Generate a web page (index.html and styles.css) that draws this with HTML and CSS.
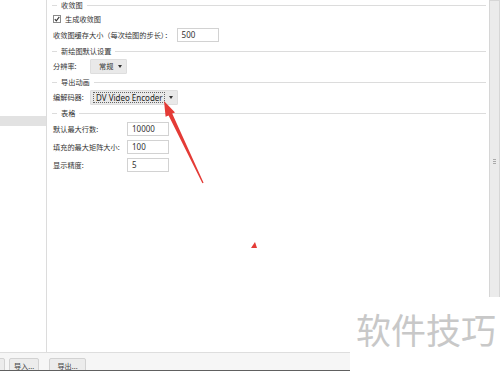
FILE: index.html
```html
<!DOCTYPE html>
<html>
<head lang="zh">
    <meta charset="UTF-8">
    <title>设置</title>
    <link rel="stylesheet" href="styles.css">
</head>
<body>
<div id="app">
    <div id="top">
        <div id="side">
            <div class="side-sel"></div>
        </div>
        <div id="main">
            <div class="legend first"><span>收敛图</span></div>
            <div class="row check">
                <svg class="box" width="8" height="8" viewBox="0 0 8 8">
                    <rect x="0.5" y="0.5" width="7" height="7" fill="#fff" stroke="#8a8a8a"/>
                    <path d="M1.8 4.2 L3.3 5.8 L6.3 1.9" fill="none" stroke="#333" stroke-width="1.1"/>
                </svg>
                <span>生成收敛图</span>
            </div>
            <div class="row">
                <span class="lbl">收敛图缓存大小（每次绘图的步长）：</span>
                <span class="input">500</span>
            </div>
            <div class="legend"><span>新绘图默认设置</span></div>
            <div class="row">
                <span class="lbl short">分辨率:</span>
                <span class="combo small"><span class="val">常规</span><i class="caret"></i></span>
            </div>
            <div class="legend"><span>导出动画</span></div>
            <div class="row">
                <span class="lbl short">编解码器:</span>
                <span class="combo wide"><span class="val focus">DV Video Encoder</span><i class="caret"></i></span>
            </div>
            <div class="legend"><span>表格</span></div>
            <div class="row tall">
                <span class="lbl long">默认最大行数:</span>
                <span class="input">10000</span>
            </div>
            <div class="row tall">
                <span class="lbl long">填充的最大矩阵大小:</span>
                <span class="input">100</span>
            </div>
            <div class="row tall">
                <span class="lbl long">显示精度:</span>
                <span class="input">5</span>
            </div>
        </div>
        <div id="scroll">
            <div class="thumb"><span class="grip"></span></div>
        </div>
    </div>
    <div id="bottom">
        <span class="btn cut"></span>
        <span class="btn import">导入...</span>
        <span class="btn export">导出...</span>
    </div>
</div>

<div id="mark">软件技巧</div>

<svg id="arrow" width="500" height="371" viewBox="0 0 500 371">
    <polygon fill="#e43b36" points="164,101 175,112.4 172.2,113.6 203.6,182.7 202.4,183.3 168.6,115.4 165.6,116.8"/>
    <polygon fill="#e43b36" points="251,248 257,248 255,242"/>
</svg>
</body>
</html>
```

FILE: styles.css
```css
*{
    margin: 0;
    padding: 0;
    box-sizing: border-box;
}
body{
    width: 500px;
    height: 371px;
    overflow: hidden;
    background: #fff;
    color: #333;
    font-family: "Noto Sans", "Noto Sans CJK SC", sans-serif;
    font-size: 7.2px;
    position: relative;
}
#app{
    display: flex;
    flex-direction: column;
    height: 371px;
}
#top{
    display: flex;
    height: 353px;
    border-bottom: 1px solid #dedede;
}
#side{
    width: 47px;
    border-right: 1px solid #dcdcdc;
    padding-top: 116px;
}
.side-sel{
    height: 10px;
    background: #e2e2e2;
}
#main{
    flex: 1;
    padding: 0 2px 0 5px;
}
.legend{
    display: flex;
    align-items: center;
    height: 12px;
    margin-top: 2px;
}
.legend.first{
    margin-top: -1px;
}
.legend::before{
    content: "";
    width: 5px;
    height: 1px;
    background: #dcdcdc;
    margin-right: 4px;
}
.legend::after{
    content: "";
    flex: 1;
    height: 1px;
    background: #dcdcdc;
    margin-left: 4px;
}
.row{
    display: flex;
    align-items: center;
    height: 16px;
    margin-top: 1px;
    padding-left: 1px;
}
.row.check{
    height: 14px;
    margin-top: 1px;
}
.row.check .box{
    margin-right: 4px;
}
.row.tall{
    height: 17px;
}
.lbl{
    margin-right: 5px;
    white-space: nowrap;
}
.lbl.short{
    width: 37px;
    margin-right: 0;
}
.lbl.long{
    width: 74px;
    margin-right: 0;
}
.input{
    width: 42px;
    height: 14px;
    border: 1px solid #d2d2d2;
    background: #fff;
    padding-left: 4px;
    font-size: 8px;
    line-height: 12px;
}
.combo{
    display: flex;
    align-items: center;
    height: 15px;
    background: #e9e9e9;
    border: 1px solid #dedede;
    border-radius: 1px;
    white-space: nowrap;
}
.combo.small{
    width: 37px;
    padding-left: 8px;
}
.combo.wide{
    width: 88px;
    padding-left: 2px;
}
.val{
    flex: none;
}
.val.focus{
    width: 72px;
    height: 11px;
    line-height: 10px;
    border: 1px dotted #666;
    font-size: 8px;
    padding-left: 2px;
    color: #222;
}
.caret{
    width: 0;
    height: 0;
    border-top: 3px solid #333;
    border-left: 2.5px solid transparent;
    border-right: 2.5px solid transparent;
    margin: 0 4px 0 auto;
}
#scroll{
    width: 12px;
    padding-left: 1px;
}
.thumb{
    height: 100%;
    background: #ebebeb;
    border: 1px solid #d6d6d6;
    display: flex;
    align-items: center;
    justify-content: center;
}
.grip{
    width: 3px;
    height: 5px;
    margin-top: -30px;
    border-top: 1px solid #aaa;
    border-bottom: 1px solid #aaa;
    background: linear-gradient(#aaa, #aaa) center / 3px 1px no-repeat;
}
#bottom{
    flex: 1;
    display: flex;
    align-items: flex-start;
    padding-top: 5px;
    background: #f6f6f6;
    border-bottom: 1px solid #606060;
    overflow: hidden;
}
.btn{
    height: 16px;
    line-height: 15px;
    text-align: center;
    background: #ececec;
    border: 1px solid #d2d2d2;
    border-radius: 2px 2px 0 0;
    white-space: nowrap;
    color: #444;
}
.btn.cut{
    width: 30px;
    margin-left: -25px;
}
.btn.import{
    width: 30px;
    margin-left: 4px;
}
.btn.export{
    width: 37px;
    margin-left: 10px;
}
#mark{
    position: absolute;
    left: 350px;
    top: 297px;
    width: 150px;
    height: 74px;
    background: #fff;
    padding: 14px 0 0 6px;
    font-family: "Noto Sans CJK SC", sans-serif;
    font-size: 35px;
    line-height: 35px;
    color: #c8c8c8;
    white-space: nowrap;
}
#arrow{
    position: absolute;
    left: 0;
    top: 0;
    pointer-events: none;
}
```
